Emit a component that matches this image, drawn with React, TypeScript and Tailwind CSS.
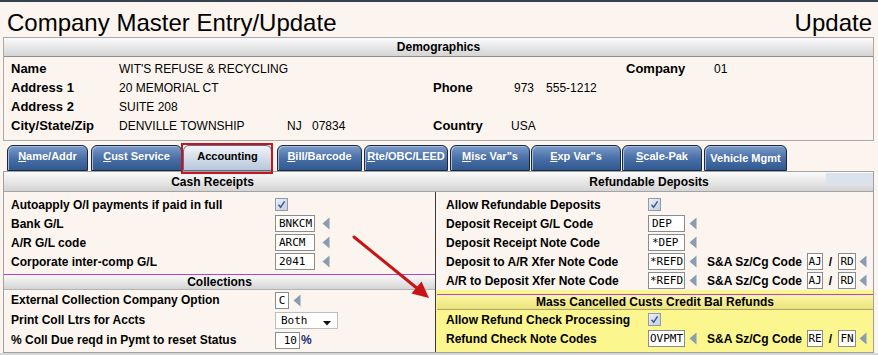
import React from "react";

type TabDef = { label: string; u: boolean; w: string; ml: string; active?: boolean; low?: boolean };

const tabs: TabDef[] = [
  { label: "Name/Addr", u: true, w: "w-[81px]", ml: "ml-0" },
  { label: "Cust Service", u: true, w: "w-[91px]", ml: "ml-[3px]" },
  { label: "Accounting", u: false, w: "w-[89px]", ml: "ml-[1px]", active: true },
  { label: "Bill/Barcode", u: true, w: "w-[85px]", ml: "ml-[5px]" },
  { label: "Rte/OBC/LEED", u: true, w: "w-[84px]", ml: "ml-[2px]" },
  { label: 'Misc Var"s', u: true, w: "w-[80px]", ml: "ml-[2px]" },
  { label: 'Exp Var"s', u: true, w: "w-[90px]", ml: "ml-[1px]" },
  { label: "Scale-Pak", u: true, w: "w-[80px]", ml: "ml-[1px]" },
  { label: "Vehicle Mgmt", u: false, w: "w-[83px]", ml: "ml-[2px]", low: true },
];

const Tri = () => (
  <svg width="8" height="13" viewBox="0 0 8 13" className="shrink-0">
    <polygon points="7.5,0.5 7.5,12.5 0.5,6.5" fill="#8a9cb2" />
  </svg>
);

const Check = () => (
  <div className="w-[13px] h-[13px] shrink-0 border border-[#8f9bad] bg-gradient-to-br from-[#eceff5] to-[#c6cfdc] flex items-center justify-center">
    <svg width="9" height="9" viewBox="0 0 9 9">
      <path d="M1.5 4.8 L3.6 7.2 L7.6 1.4" stroke="#3c5b9e" strokeWidth="1.5" fill="none" />
    </svg>
  </div>
);

const Box = ({ v, w, cls = "px-[3px]" }: { v: string; w: string; cls?: string }) => (
  <div
    className={`${w} ${cls} h-[17px] shrink-0 border border-[#8c8c8c] bg-white flex items-center font-['DejaVu_Sans_Mono',monospace] text-[11px] leading-none text-black overflow-hidden`}
  >
    {v}
  </div>
);

const Bar = ({ children, cls }: { children: React.ReactNode; cls: string }) => (
  <div className={`${cls} flex items-center justify-center text-[12px] font-bold bg-gradient-to-b from-[#fbfbfb] to-[#d4d4d4]`}>
    {children}
  </div>
);

const LRow = ({ label, children, h = "h-[19px]" }: { label: string; children?: React.ReactNode; h?: string }) => (
  <div className={`${h} flex items-center pl-[7px]`}>
    <div className="w-[264px] shrink-0 text-[12px] font-bold leading-none">{label}</div>
    {children}
  </div>
);

const RRow = ({ label, children }: { label: string; children?: React.ReactNode }) => (
  <div className="h-[19px] flex items-center pl-[10px]">
    <div className="w-[202px] shrink-0 text-[12px] font-bold leading-none">{label}</div>
    {children}
  </div>
);

const SA = ({ a, b }: { a: string; b: string }) => (
  <>
    <div className="ml-[10px] w-[100px] shrink-0 text-[12px] font-bold leading-none">S&amp;A Sz/Cg Code</div>
    <Box v={a} w="w-[16px]" cls="justify-center px-0" />
    <div className="w-[15px] shrink-0 text-center text-[12px] font-bold leading-none">/</div>
    <Box v={b} w="w-[18px]" cls="justify-center px-0" />
    <div className="ml-[3px] flex">
      <Tri />
    </div>
  </>
);

function Tab({ t }: { t: TabDef }) {
  const first = t.label.slice(0, 1);
  const rest = t.label.slice(1);
  if (t.active) {
    return (
      <div className={`${t.w} ${t.ml} relative h-[26px] shrink-0`}>
        <div className="h-full rounded-t-[6px] border border-[#5d6d84] bg-gradient-to-b from-[#f1f4f8] to-[#b7c7db] flex items-center justify-center pb-[3px] text-[11px] font-bold text-black">
          {t.label}
        </div>
        <div className="absolute -left-[2px] -top-[2px] w-[92px] h-[31px] border-2 border-[#c8141e] z-10" />
      </div>
    );
  }
  return (
    <div
      className={`${t.w} ${t.ml} h-[26px] shrink-0 rounded-t-[6px] border border-[#1a283c] bg-gradient-to-b from-[#7c9bc9] via-[#4b71a7] to-[#30598f] shadow-[inset_1px_1px_0_#a6bcdc] flex items-center justify-center ${t.low ? "pt-[1px]" : "pb-[3px]"} text-[11px] font-bold text-white whitespace-nowrap`}
    >
      {t.u ? (
        <>
          <span className="underline">{first}</span>
          {rest}
        </>
      ) : (
        t.label
      )}
    </div>
  );
}

export default function App() {
  return (
    <div className="relative w-[878px] h-[355px] overflow-hidden bg-[#d6d6d6] font-['Liberation_Sans',Arial,sans-serif] text-black">
      <div className="bg-[#fcf5ef] border-t-2 border-[#34414f] pb-0">
        {/* title */}
        <div className="h-[35px] pt-[9px] pl-[7px] pr-[6px] flex items-start justify-between text-[24px] leading-[24px]">
          <span>Company Master Entry/Update</span>
          <span>Update</span>
        </div>

        {/* demographics */}
        <div className="ml-[3px] mr-[4px] border border-[#a9a9a9]">
          <Bar cls="h-[19px] border-b border-[#8e8e8e]">Demographics</Bar>
          <div className="pt-[2px] pb-[5px] text-[12px]">
            <div className="h-[19px] flex items-center pl-[7px]">
              <span className="w-[108px] text-[13px] font-bold">Name</span>
              <span className="w-[314px]">WIT'S REFUSE &amp; RECYCLING</span>
              <span className="w-[78px]" />
              <span className="w-[115px]" />
              <span className="w-[88px] text-[13px] font-bold">Company</span>
              <span>01</span>
            </div>
            <div className="h-[19px] flex items-center pl-[7px]">
              <span className="w-[108px] text-[13px] font-bold">Address 1</span>
              <span className="w-[314px]">20 MEMORIAL CT</span>
              <span className="w-[78px] text-[13px] font-bold">Phone</span>
              <span className="pl-[3px] flex gap-[12px]">
                <span>973</span>
                <span>555-1212</span>
              </span>
            </div>
            <div className="h-[19px] flex items-center pl-[7px]">
              <span className="w-[108px] text-[13px] font-bold">Address 2</span>
              <span className="w-[314px]">SUITE 208</span>
            </div>
            <div className="h-[19px] flex items-center pl-[7px]">
              <span className="w-[108px] text-[13px] font-bold">City/State/Zip</span>
              <span className="w-[314px] flex">
                <span className="w-[168px]">DENVILLE TOWNSHIP</span>
                <span className="w-[25px]">NJ</span>
                <span>07834</span>
              </span>
              <span className="w-[78px] text-[13px] font-bold">Country</span>
              <span>USA</span>
            </div>
          </div>
        </div>

        {/* tabs */}
        <div className="mt-[4px] ml-[7px] flex items-end">
          {tabs.map((t) => (
            <Tab key={t.label} t={t} />
          ))}
        </div>

        {/* content */}
        <div className="ml-[3px] mr-[4px] border-l border-r border-b border-[#a0a0a0]">
          <div className="relative h-[21px] flex border-t border-b border-[#a3a3a3]">
            <Bar cls="w-[432px] h-full pr-[15px]">Cash Receipts</Bar>
            <Bar cls="flex-1 h-full pr-[11px]">Refundable Deposits</Bar>
            <div className="absolute right-0 top-[1px] w-[47px] h-[11px] bg-[#dae3ed]" />
          </div>
          <div className="h-[160px] flex overflow-hidden">
            {/* left column */}
            <div className="w-[432px] shrink-0 border-r border-[#3a3a3a] pt-[3px]">
              <LRow label="Autoapply O/I payments if paid in full">
                <Check />
              </LRow>
              <LRow label="Bank G/L">
                <Box v="BNKCM" w="w-[40px]" />
                <div className="ml-[7px] flex">
                  <Tri />
                </div>
              </LRow>
              <LRow label="A/R G/L code">
                <Box v="ARCM" w="w-[40px]" />
                <div className="ml-[7px] flex">
                  <Tri />
                </div>
              </LRow>
              <LRow label="Corporate inter-comp G/L">
                <Box v="2041" w="w-[40px]" />
                <div className="ml-[7px] flex">
                  <Tri />
                </div>
              </LRow>
              <div className="mt-[3px] border-t border-[#c83cc8]">
                <Bar cls="h-[15px] border-b border-[#b4b4b4]">Collections</Bar>
              </div>
              <LRow label="External Collection Company Option" h="h-[20px]">
                <Box v="C" w="w-[14px]" cls="justify-center px-0" />
                <div className="ml-[4px] flex">
                  <Tri />
                </div>
              </LRow>
              <LRow label="Print Coll Ltrs for Accts" h="h-[20px]">
                <div className="relative w-[63px] h-[17px] shrink-0 border border-[#bdbdbd] bg-white flex items-center pl-[5px] font-['DejaVu_Sans_Mono',monospace] text-[11px] leading-none">
                  Both
                  <svg width="8" height="5" viewBox="0 0 8 5" className="absolute right-[6px] top-[8px]">
                    <polygon points="0,0 8,0 4,4.5" fill="#111" />
                  </svg>
                </div>
              </LRow>
              <LRow label="% Coll Due reqd in Pymt to reset Status" h="h-[20px]">
                <Box v="10" w="w-[25px]" cls="justify-end px-[2px]" />
                <span className="ml-[1px] text-[12px] font-bold leading-none text-[#1b2d72]">%</span>
              </LRow>
            </div>

            {/* right column */}
            <div className="flex-1 flex flex-col">
              <div className="pt-[3px]">
                <RRow label="Allow Refundable Deposits">
                  <Check />
                </RRow>
                <RRow label="Deposit Receipt G/L Code">
                  <Box v="DEP" w="w-[37px]" />
                  <div className="ml-[4px] flex">
                    <Tri />
                  </div>
                </RRow>
                <RRow label="Deposit Receipt Note Code">
                  <Box v="*DEP" w="w-[37px]" />
                  <div className="ml-[4px] flex">
                    <Tri />
                  </div>
                </RRow>
                <RRow label="Deposit to A/R Xfer Note Code">
                  <Box v="*REFD" w="w-[37px]" cls="px-[1px]" />
                  <div className="ml-[4px] flex">
                    <Tri />
                  </div>
                  <SA a="AJ" b="RD" />
                </RRow>
                <RRow label="A/R to Deposit Xfer Note Code">
                  <Box v="*REFD" w="w-[37px]" cls="px-[1px]" />
                  <div className="ml-[4px] flex">
                    <Tri />
                  </div>
                  <SA a="AJ" b="RD" />
                </RRow>
              </div>
              <div className="flex-1 bg-[#fbf68e] pt-[4px]">
                <div className="ml-[1px] h-[16px] border-t border-b border-[#c83cc8] border-b-[#a9a27a] bg-gradient-to-b from-[#fbf7a6] to-[#ece37a] flex items-center justify-center text-[12px] font-bold">
                  Mass Cancelled Custs Credit Bal Refunds
                </div>
                <RRow label="Allow Refund Check Processing">
                  <Check />
                </RRow>
                <RRow label="Refund Check Note Codes">
                  <Box v="OVPMT" w="w-[37px]" cls="px-[1px]" />
                  <div className="ml-[4px] flex">
                    <Tri />
                  </div>
                  <SA a="RE" b="FN" />
                </RRow>
              </div>
            </div>
          </div>
        </div>
      </div>

      {/* annotation arrow */}
      <svg className="absolute left-0 top-0 pointer-events-none z-20" width="878" height="355" viewBox="0 0 878 355">
        <line x1="354" y1="237" x2="418" y2="289" stroke="#c81414" strokeWidth="3" strokeLinecap="round" />
        <polygon points="429,298 411.5,293.5 421.5,281.5" fill="#c81414" />
      </svg>
    </div>
  );
}
